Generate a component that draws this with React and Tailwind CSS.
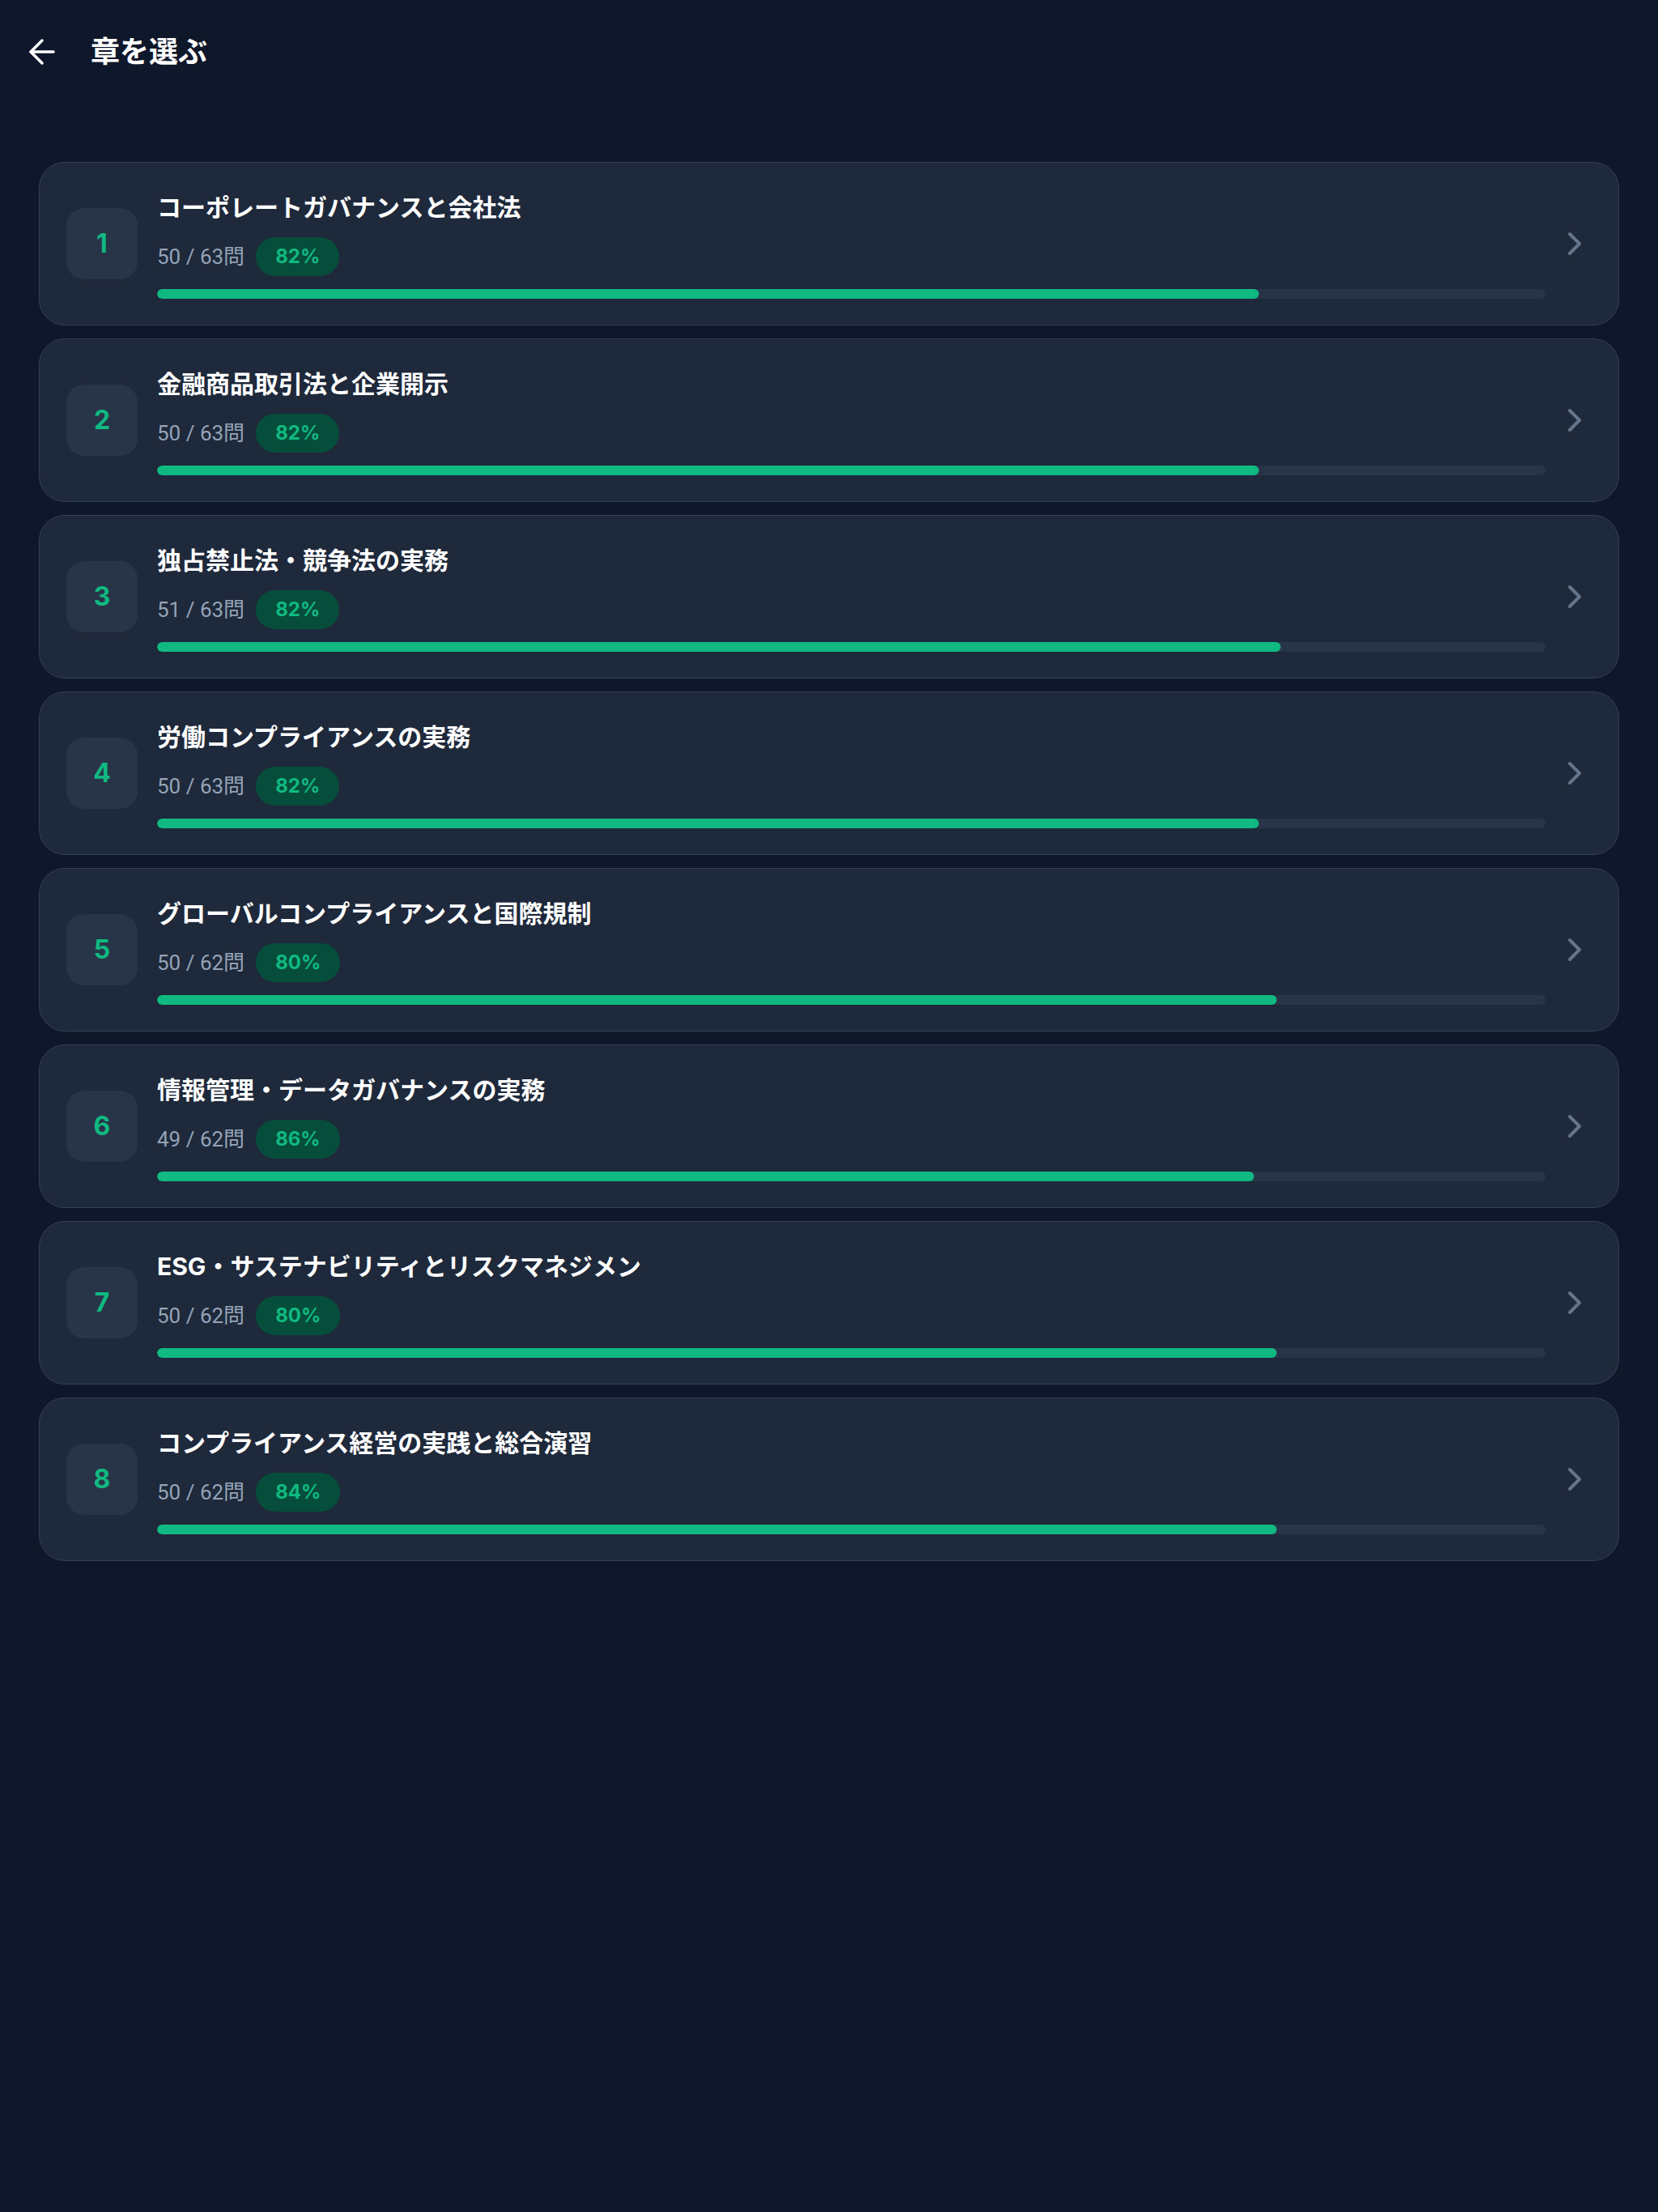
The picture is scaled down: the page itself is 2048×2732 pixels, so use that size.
import React from "react";
import { ArrowLeft, ChevronRight } from "lucide-react";

const chapters = [
  { n: 1, title: "コーポレートガバナンスと会社法", done: 50, total: 63, pct: 82 },
  { n: 2, title: "金融商品取引法と企業開示", done: 50, total: 63, pct: 82 },
  { n: 3, title: "独占禁止法・競争法の実務", done: 51, total: 63, pct: 82 },
  { n: 4, title: "労働コンプライアンスの実務", done: 50, total: 63, pct: 82 },
  { n: 5, title: "グローバルコンプライアンスと国際規制", done: 50, total: 62, pct: 80 },
  { n: 6, title: "情報管理・データガバナンスの実務", done: 49, total: 62, pct: 86 },
  { n: 7, title: "ESG・サステナビリティとリスクマネジメン", done: 50, total: 62, pct: 80 },
  { n: 8, title: "コンプライアンス経営の実践と総合演習", done: 50, total: 62, pct: 84 },
];

function ChapterCard({ c }) {
  const fill = (c.done / c.total) * 100;
  return (
    <div className="flex items-center rounded-[32px] border border-[#334155] bg-[#1e293b] pl-[33px] pr-[30px] py-[32px]">
      <div className="flex h-[88px] w-[88px] shrink-0 items-center justify-center rounded-[22px] bg-[#283548] text-[32px] font-bold text-[#10b981]">
        {c.n}
      </div>
      <div className="ml-[24px] flex min-w-0 flex-1 flex-col">
        <div className="text-[30px] font-bold leading-[47px] text-white">{c.title}</div>
        <div className="mt-[13px] flex items-center gap-[14px]">
          <span className="font-['Roboto','Noto_Sans_CJK_JP',sans-serif] text-[26px] leading-[36px] text-[#94a3b8]">
            {c.done} / {c.total}問
          </span>
          <span className="rounded-full bg-[#064e3b] px-[24px] py-[6px] text-[24px] font-bold leading-[36px] text-[#10b981]">
            {c.pct}%
          </span>
        </div>
        <div className="mt-[16px] h-[12px] w-full overflow-hidden rounded-full bg-[#283548]">
          <div className="h-full rounded-full bg-[#10b981]" style={{ width: `${fill}%` }} />
        </div>
      </div>
      <ChevronRight className="ml-[12px] shrink-0 text-[#64748b]" size={48} strokeWidth={2} />
    </div>
  );
}

export default function App() {
  return (
    <div className="min-h-[2732px] bg-[#0f172a] font-['Inter','Noto_Sans_CJK_JP',sans-serif]">
      <header className="flex h-[128px] items-center gap-[36px] pl-[28px]">
        <ArrowLeft className="text-white" size={48} strokeWidth={1.75} />
        <h1 className="text-[36px] font-bold leading-[48px] text-white">章を選ぶ</h1>
      </header>
      <main className="flex flex-col gap-[16px] px-[48px] pt-[72px]">
        {chapters.map((c) => (
          <ChapterCard key={c.n} c={c} />
        ))}
      </main>
    </div>
  );
}
